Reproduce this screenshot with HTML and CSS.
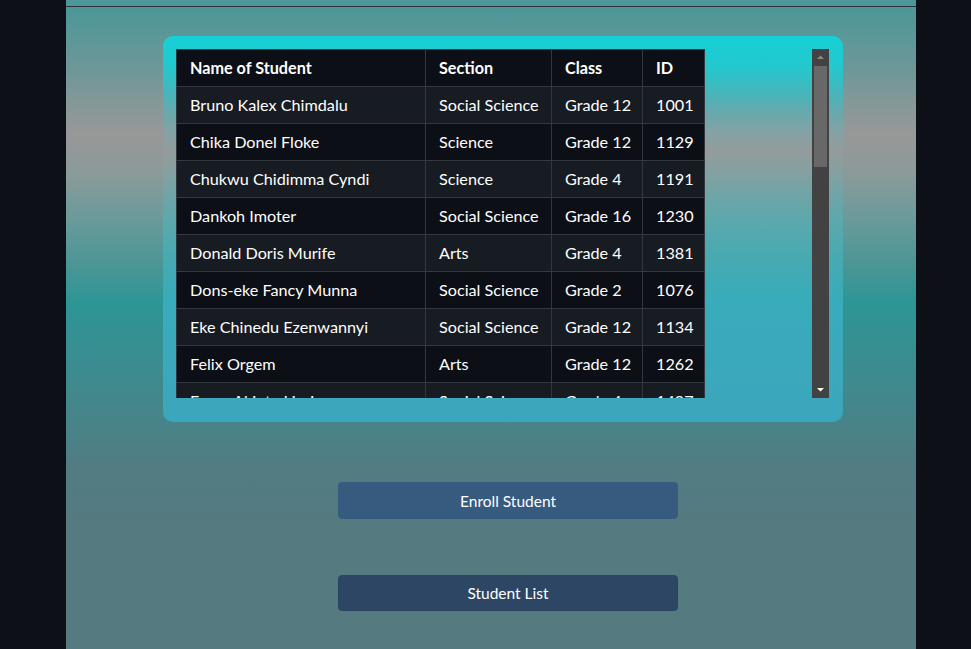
FILE: index.html
```html
<!DOCTYPE html>
<html lang="en">
<head>
<meta charset="utf-8">
<title>Students</title>
<link rel="stylesheet" href="styles.css">
</head>
<body>
<main class="page">
  <div class="topbar"></div>
  <section class="card">
    <div class="scroll-area">
      <div class="viewport">
        <table class="students">
          <colgroup>
            <col class="c-name"><col class="c-sec"><col class="c-class"><col class="c-id">
          </colgroup>
          <thead>
            <tr><th>Name of Student</th><th>Section</th><th>Class</th><th>ID</th></tr>
          </thead>
          <tbody>
            <tr><td>Bruno Kalex Chimdalu</td><td>Social Science</td><td>Grade 12</td><td>1001</td></tr>
            <tr><td>Chika Donel Floke</td><td>Science</td><td>Grade 12</td><td>1129</td></tr>
            <tr><td>Chukwu Chidimma Cyndi</td><td>Science</td><td>Grade 4</td><td>1191</td></tr>
            <tr><td>Dankoh Imoter</td><td>Social Science</td><td>Grade 16</td><td>1230</td></tr>
            <tr><td>Donald Doris Murife</td><td>Arts</td><td>Grade 4</td><td>1381</td></tr>
            <tr><td>Dons-eke Fancy Munna</td><td>Social Science</td><td>Grade 2</td><td>1076</td></tr>
            <tr><td>Eke Chinedu Ezenwannyi</td><td>Social Science</td><td>Grade 12</td><td>1134</td></tr>
            <tr><td>Felix Orgem</td><td>Arts</td><td>Grade 12</td><td>1262</td></tr>
            <tr><td>Femo Akinte Lizzie</td><td>Social Science</td><td>Grade 4</td><td>1497</td></tr>
          </tbody>
        </table>
      </div>
      <div class="vbar" aria-hidden="true">
        <div class="vbar-btn">
          <svg width="17" height="17" viewBox="0 0 17 17"><path d="M5 10 L8.5 6.5 L12 10 Z" fill="#8a8a8a"/></svg>
        </div>
        <div class="vbar-track"><div class="vbar-thumb"></div></div>
        <div class="vbar-btn">
          <svg width="17" height="17" viewBox="0 0 17 17"><path d="M5 7 L12 7 L8.5 10.5 Z" fill="#ffffff"/></svg>
        </div>
      </div>
    </div>
  </section>
  <div class="actions">
    <button class="btn btn-enroll" type="button">Enroll Student</button>
    <button class="btn btn-list" type="button">Student List</button>
  </div>
</main>
</body>
</html>
```

FILE: styles.css
```css
html, body {
  margin: 0;
  padding: 0;
  height: 100%;
}
body {
  background: #0d1017;
  font-family: "Lato", "Noto Sans", sans-serif;
  color: #fff;
  overflow: hidden;
}
.page {
  width: 850px;
  height: 649px;
  margin-left: 66px;
  background: linear-gradient(180deg,
    #4b9799 0px,
    #4b9799 7px,
    #6f9798 70px,
    #989898 133px,
    #8a9a9a 175px,
    #6a9a9a 220px,
    #4f9696 260px,
    #2d9595 303px,
    #3a8d90 360px,
    #478489 420px,
    #517c82 470px,
    #557a80 530px,
    #557a80 649px);
  display: flex;
  flex-direction: column;
}
.topbar {
  height: 6px;
  border-bottom: 1px solid #2b3036;
  flex: none;
}
.card {
  margin: 29px 0 0 97px;
  width: 680px;
  box-sizing: border-box;
  padding: 13px 14px 24px 13px;
  border-radius: 10px;
  background: linear-gradient(180deg,
    rgba(23, 208, 214, 1) 0%,
    rgba(23, 208, 214, 0.85) 8%,
    rgba(40, 200, 210, 0.35) 20%,
    rgba(160, 180, 180, 0.1) 30%,
    rgba(70, 190, 200, 0.45) 50%,
    rgba(60, 180, 200, 0.75) 70%,
    rgba(58, 168, 192, 0.95) 100%);
  flex: none;
}
.scroll-area {
  display: flex;
  height: 349px;
}
.viewport {
  width: 636px;
  height: 349px;
  overflow: hidden;
}
.vbar {
  width: 17px;
  background: #424242;
  display: flex;
  flex-direction: column;
}
.vbar-btn {
  height: 17px;
  flex: none;
}
.vbar-btn svg {
  display: block;
}
.vbar-track {
  flex: 1;
  padding: 0 2px;
}
.vbar-thumb {
  height: 101px;
  background: #686868;
}
.students {
  border-collapse: collapse;
  table-layout: fixed;
  width: 528px;
  font-size: 16.2px;
  line-height: 24px;
  color: #fff;
}
.c-name { width: 249px; }
.c-sec { width: 126px; }
.c-class { width: 91px; }
.c-id { width: 62px; }
.students th,
.students td {
  border: 1px solid #32383e;
  padding: 6px 13px;
  text-align: left;
  white-space: nowrap;
  overflow: hidden;
}
.students th {
  font-weight: 700;
  background: #0c0f16;
}
.students tbody tr:nth-child(odd) td {
  background: #171b22;
}
.students tbody tr:nth-child(even) td {
  background: #0c0f16;
}
.actions {
  display: flex;
  flex-direction: column;
  align-items: flex-start;
  padding-left: 272px;
  gap: 56px;
  margin-top: 60px;
}
.btn {
  width: 340px;
  height: 37px;
  border-radius: 4px;
  font-family: "Lato", "Noto Sans", sans-serif;
  font-size: 15.5px;
  line-height: 20px;
  color: #fff;
  cursor: pointer;
  padding: 0;
}
.btn-enroll {
  background: #375a7f;
  border: 1px solid #375a7f;
}
.btn-list {
  height: 36px;
  background: #2c4663;
  border: 1px solid #2a4460;
}
```
